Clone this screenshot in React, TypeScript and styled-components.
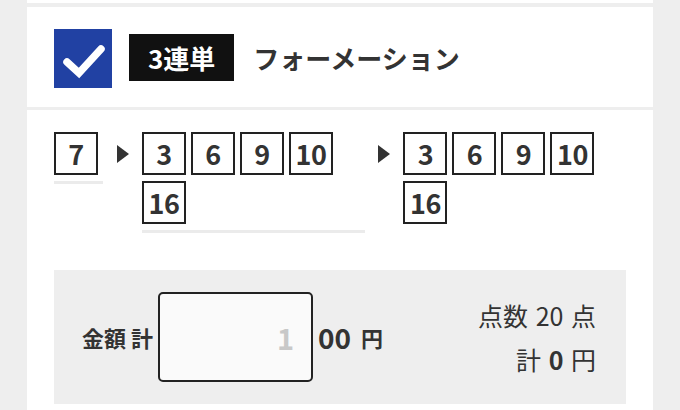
import React from "react";
import styled, { createGlobalStyle } from "styled-components";

const GlobalStyle = createGlobalStyle`
  body {
    margin: 0;
    background: #eeeeee;
    font-family: "Noto Sans CJK JP", "Noto Sans", sans-serif;
    color: #333333;
  }
`;

const Page = styled.div`
  padding: 0 27px;
  display: flex;
  flex-direction: column;
`;

const TopStrip = styled.div`
  height: 3px;
  background: #ffffff;
`;

const HeaderCard = styled.div`
  margin-top: 4px;
  height: 100px;
  background: #ffffff;
  display: flex;
  align-items: center;
  padding-left: 27px;
`;

const CheckBox = styled.div`
  width: 58px;
  height: 59px;
  background: #2141a3;
  display: flex;
  align-items: center;
  justify-content: center;
  margin-top: 2px;
`;

const TypeLabel = styled.div`
  margin-left: 17px;
  height: 47px;
  padding: 0 19px;
  background: #111111;
  color: #ffffff;
  font-size: 26px;
  font-weight: 700;
  display: flex;
  align-items: center;
`;

const Title = styled.div`
  margin-left: 19px;
  font-size: 26px;
  font-weight: 700;
  color: #333333;
`;

const BodyCard = styled.div`
  margin-top: 3px;
  background: #ffffff;
  padding: 22px 27px 6px;
`;

const SelectRow = styled.div`
  display: flex;
  align-items: flex-start;
`;

const Column = styled.div<{ $width?: number; $line?: boolean }>`
  display: flex;
  flex-wrap: wrap;
  width: ${(p) => (p.$width ? `${p.$width}px` : "auto")};
  border-bottom: 3px solid ${(p) => (p.$line ? "#ebebeb" : "transparent")};
`;

const NumBox = styled.div`
  box-sizing: border-box;
  width: 44px;
  height: 43px;
  margin: 0 5px 6px 0;
  border: 2px solid #222222;
  display: flex;
  align-items: center;
  justify-content: center;
  font-size: 27px;
  font-weight: 700;
  color: #333333;
  line-height: 1;
  letter-spacing: -0.5px;
`;

const Arrow = styled.div`
  width: 39px;
  height: 43px;
  display: flex;
  align-items: center;
  justify-content: center;
  &::before {
    content: "";
    border-style: solid;
    border-width: 9.5px 0 9.5px 12px;
    border-color: transparent transparent transparent #333333;
    margin-left: 1px;
  }
`;

const Summary = styled.div`
  margin-top: 37px;
  height: 134px;
  background: #eeeeee;
  display: flex;
  align-items: center;
  justify-content: space-between;
  padding: 0 30px 0 28px;
`;

const AmountGroup = styled.div`
  display: flex;
  align-items: center;
`;

const AmountLabel = styled.span`
  font-size: 22px;
  font-weight: 700;
  color: #333333;
`;

const AmountInput = styled.input`
  box-sizing: border-box;
  width: 155px;
  height: 90px;
  margin: 0 5px 0 5px;
  border: 2px solid #222222;
  border-radius: 5px;
  background: #fafafa;
  padding: 0 17px 0 0;
  text-align: right;
  font-family: "Noto Sans CJK JP", "Noto Sans", sans-serif;
  font-size: 29px;
  font-weight: 700;
  color: #c8c8c8;
  outline: none;
`;

const Zeros = styled.span`
  font-size: 28px;
  font-weight: 700;
  color: #333333;
`;

const Yen = styled.span`
  margin-left: 10px;
  font-size: 22px;
  font-weight: 700;
  color: #333333;
`;

const Totals = styled.div`
  display: flex;
  flex-direction: column;
  align-items: flex-end;
`;

const TotalLine = styled.div`
  font-size: 25px;
  line-height: 44px;
  color: #333333;
  word-spacing: 2px;
  b {
    font-weight: 700;
  }
`;

const first = [7];
const second = [3, 6, 9, 10, 16];
const third = [3, 6, 9, 10, 16];

export default function App() {
  return (
    <>
      <GlobalStyle />
      <Page>
        <TopStrip />
        <HeaderCard>
          <CheckBox>
            <svg width="58" height="59" viewBox="0 0 58 59">
              <polyline
                points="13,33 25,44 47,20"
                fill="none"
                stroke="#ffffff"
                strokeWidth="7.5"
                strokeLinecap="round"
              />
            </svg>
          </CheckBox>
          <TypeLabel>3連単</TypeLabel>
          <Title>フォーメーション</Title>
        </HeaderCard>
        <BodyCard>
          <SelectRow>
            <Column $line>
              {first.map((n) => (
                <NumBox key={n}>{n}</NumBox>
              ))}
            </Column>
            <Arrow />
            <Column $width={223} $line>
              {second.map((n) => (
                <NumBox key={n}>{n}</NumBox>
              ))}
            </Column>
            <Arrow />
            <Column $width={223}>
              {third.map((n) => (
                <NumBox key={n}>{n}</NumBox>
              ))}
            </Column>
          </SelectRow>
          <Summary>
            <AmountGroup>
              <AmountLabel>金額 計</AmountLabel>
              <AmountInput defaultValue="1" />
              <Zeros>00</Zeros>
              <Yen>円</Yen>
            </AmountGroup>
            <Totals>
              <TotalLine>点数 20 点</TotalLine>
              <TotalLine>
                計 <b>0</b> 円
              </TotalLine>
            </Totals>
          </Summary>
        </BodyCard>
      </Page>
    </>
  );
}
